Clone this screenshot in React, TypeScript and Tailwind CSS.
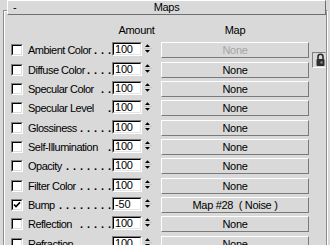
import React from 'react';

interface MapRow {
    label: string;
    dots: number;
    amount: string;
    map: string;
    tall?: boolean;
    checked?: boolean;
    disabled?: boolean;
}

// row pitch in the rollout alternates 20/19/19 px
const rows: MapRow[] = [
    { label: 'Ambient Color', dots: 3, amount: '100', map: 'None', tall: true, disabled: true },
    { label: 'Diffuse Color', dots: 4, amount: '100', map: 'None' },
    { label: 'Specular Color', dots: 2, amount: '100', map: 'None' },
    { label: 'Specular Level', dots: 1, amount: '100', map: 'None', tall: true },
    { label: 'Glossiness', dots: 5, amount: '100', map: 'None' },
    { label: 'Self-Illumination', dots: 1, amount: '100', map: 'None' },
    { label: 'Opacity', dots: 7, amount: '100', map: 'None', tall: true },
    { label: 'Filter Color', dots: 5, amount: '100', map: 'None' },
    { label: 'Bump', dots: 8, amount: '-50', map: 'Map #28  ( Noise )', checked: true },
    { label: 'Reflection', dots: 5, amount: '100', map: 'None', tall: true },
    { label: 'Refraction', dots: 5, amount: '100', map: 'None' },
];

const Checkbox: React.FC<{ checked?: boolean }> = ({ checked }) => (
    <div className="w-[12px] h-[12px] border border-[#808080] border-b-white border-r-white">
        <div className="w-full h-full border border-black border-b-[#dcdcdc] border-r-[#dcdcdc] bg-white">
            {checked && (
                <svg width="8" height="8" viewBox="0 0 8 8" className="block">
                    <path d="M1 3.5 L3 5.6 L7 1.4" fill="none" stroke="#000" strokeWidth="1.6" />
                </svg>
            )}
        </div>
    </div>
);

const Spinner: React.FC = () => (
    <svg width="10" height="14" viewBox="0 0 10 14" className="block">
        <polygon points="2,5 7,5 4.5,2.3" fill="#000" />
        <line x1="1" y1="6.5" x2="9" y2="6.5" stroke="#c4c4c4" strokeWidth="1" />
        <polygon points="2,8 7,8 4.5,10.7" fill="#000" />
    </svg>
);

const LockIcon: React.FC = () => (
    <svg width="12" height="14" viewBox="0 0 12 14" className="block">
        <path d="M5 6.5 V3.8 a2.5 2.5 0 0 1 5 0 V6.5" fill="none" stroke="#2a2a2a" strokeWidth="1.6" />
        <rect x="3.5" y="6" width="8" height="7" rx="1" fill="#2e2e2e" />
        <rect x="7.5" y="8.5" width="2" height="2" fill="#9a9a9a" />
    </svg>
);

export default function App() {
    return (
        <div className="w-[330px] h-[245px] overflow-hidden bg-[#d9d9d9] text-[11px] text-black" style={{ fontFamily: '"Liberation Sans", Arial, sans-serif' }}>
            <div className="pt-[10px] pl-[3px] pr-[2px]">
                <div className="border-t border-l border-r border-[#8c8c8c] border-r-white">
                    <div className="border-t border-l border-r border-white border-r-[#8c8c8c] h-[260px]">
                        {/* rollout title */}
                        <div className="-mt-[12px] ml-[2px] h-[15px] grid grid-cols-[1fr_auto_1fr] items-center bg-[#d9d9d9] border border-white border-b-[#6e6e6e] border-r-[#6e6e6e] leading-[13px]">
                            <span className="pl-[5px]">-</span>
                            <span className="tracking-[-0.3px]">Maps</span>
                            <span />
                        </div>

                        {/* column titles */}
                        <div className="mt-[7px] h-[16px] flex leading-[16px] tracking-[-0.3px]">
                            <div className="ml-[107px] w-[49px] text-center">Amount</div>
                            <div className="w-[148px] text-center">Map</div>
                        </div>

                        <div className="mt-[4px] flex">
                            <div className="flex flex-col">
                                {rows.map(r => (
                                    <div key={r.label} className={`flex items-start shrink-0 ${r.tall ? 'h-[20px]' : 'h-[19px]'}`}>
                                        <div className="ml-[6px] mt-[2px]">
                                            <Checkbox checked={r.checked} />
                                        </div>
                                        <div className="ml-[5px] w-[84px] h-[16px] flex justify-between leading-[16px] whitespace-nowrap">
                                            <span className="tracking-[-0.5px]">{r.label}</span>
                                            <span className="flex gap-[4px] pr-[1px] font-bold">
                                                {Array.from({ length: r.dots }).map((_, i) => (
                                                    <span key={i} className="w-[3px]">.</span>
                                                ))}
                                            </span>
                                        </div>
                                        <div className="w-[30px] h-[14px] border border-[#808080] border-b-white border-r-white">
                                            <div className="w-full h-full bg-white border border-black border-b-[#e4e4e4] border-r-[#e4e4e4] pl-[1px] leading-[10px] tracking-[-0.2px]">
                                                {r.amount}
                                            </div>
                                        </div>
                                        <div className="ml-[1px]">
                                            <Spinner />
                                        </div>
                                        <div
                                            className={`ml-[8px] w-[148px] h-[16px] border border-white border-b-[#7a7a7a] border-r-[#7a7a7a] text-center leading-[14px] whitespace-pre tracking-[-0.3px] ${r.disabled ? 'text-[#a6a6a6]' : 'text-black'}`}
                                        >
                                            {r.map}
                                        </div>
                                    </div>
                                ))}
                            </div>
                            <div className="ml-[3px] w-[14px]">
                                <div className="mt-[10px] h-[16px] border border-[#808080] border-b-white border-r-transparent">
                                    <LockIcon />
                                </div>
                            </div>
                        </div>
                    </div>
                </div>
            </div>
        </div>
    );
}
